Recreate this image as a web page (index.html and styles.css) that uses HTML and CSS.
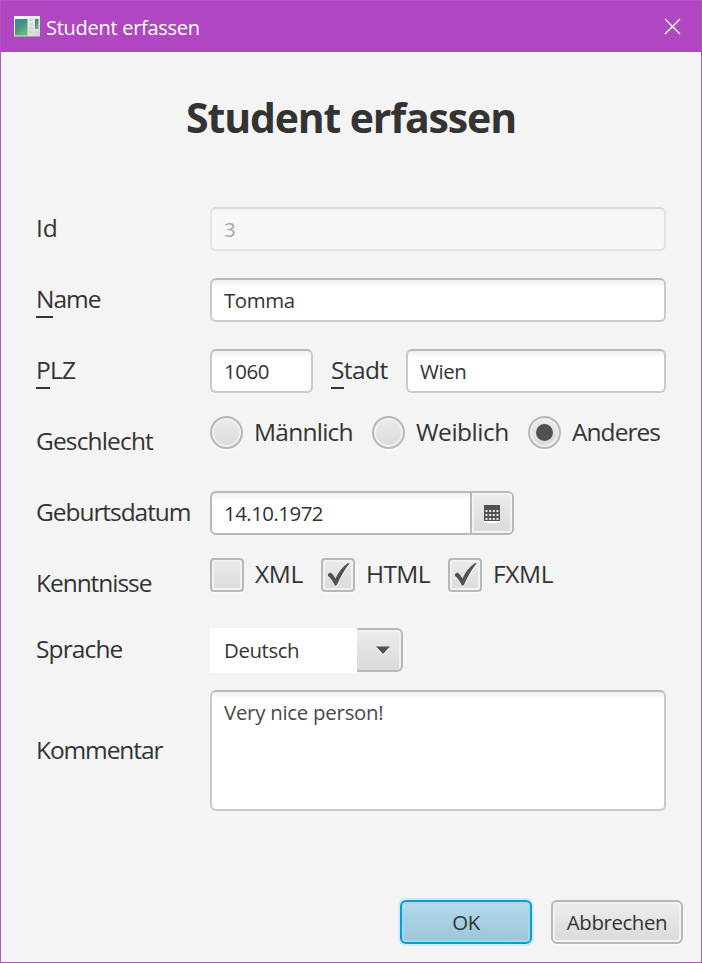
FILE: index.html
```
<!DOCTYPE html>
<html lang="de">
<head>
<meta charset="utf-8">
<title>Student erfassen</title>
<link rel="stylesheet" href="styles.css">
</head>
<body>
<div class="window">
  <header class="titlebar">
    <svg class="app-icon" width="28" height="23" viewBox="0 0 28 23">
      <defs>
        <linearGradient id="pane" x1="0" y1="0" x2="0.6" y2="1"><stop offset="0" stop-color="#4680a8"/><stop offset="0.5" stop-color="#43957f"/><stop offset="1" stop-color="#6cb87c"/></linearGradient>
        <linearGradient id="frame" x1="0" y1="0" x2="1" y2="1"><stop offset="0" stop-color="#fafafa"/><stop offset="1" stop-color="#d5d5d8"/></linearGradient>
      </defs>
      <rect x="0.5" y="0.500" width="27" height="22" fill="#8d5b9c"/>
      <rect x="1" y="1" width="26" height="20.5" fill="url(#frame)"/>
      <rect x="2" y="4" width="12.5" height="16.5" fill="url(#pane)"/>
      <path d="M16 5h4M16 9h4M16 13h4M16 17h4M22 17h4" stroke="#d2d4d6" stroke-width="2"/>
      <rect x="22" y="4" width="3.5" height="10" fill="url(#pane)"/>
    </svg>
    <span class="window-title">Student erfassen</span>
    <svg class="close" width="17" height="17" viewBox="0 0 17 17"><path d="M1 1L16 16M16 1L1 16" stroke="#fff" stroke-width="1.3" fill="none"/></svg>
  </header>
  <main>
    <h1>Student erfassen</h1>
    <form class="form">
      <span class="label id">Id</span>
      <div class="cell"><div class="input disabled grow">3</div></div>

      <span class="label name"><span class="key">N</span>ame</span>
      <div class="cell"><div class="input grow">Tomma</div></div>

      <span class="label plz"><span class="key">P</span>LZ</span>
      <div class="cell">
        <div class="input zip">1060</div>
        <span class="label city-label"><span class="key">S</span>tadt</span>
        <div class="input grow">Wien</div>
      </div>

      <span class="label gender">Geschlecht</span>
      <div class="cell raised">
        <span class="radio"></span><span class="label option male">Männlich</span>
        <span class="radio"></span><span class="label option female">Weiblich</span>
        <span class="radio selected"></span><span class="label option other">Anderes</span>
      </div>

      <span class="label birth">Geburtsdatum</span>
      <div class="cell">
        <div class="datepicker">
          <span class="date">14.10.1972</span>
          <span class="date-button">
            <svg width="16" height="18" viewBox="0 0 16 18"><path d="M0 17h16" stroke="#fff" stroke-width="2"/><path d="M0 0h16v16H0z" fill="#515151"/><path d="M1.5 6h13M1.5 10h13M1.5 14h13" stroke="#eee" stroke-width="2" stroke-dasharray="2 1.65"/></svg>
          </span>
        </div>
      </div>

      <span class="label skills">Kenntnisse</span>
      <div class="cell raised">
        <span class="check"></span><span class="label option xml">XML</span>
        <span class="check"><svg width="24" height="26" viewBox="0 0 24 26"><path d="M2 14.5L5 12Q8 14 9.500 18Q14 8 22.500 2L24 2.500Q16.500 11 11 24.500L9 25Q6 18 2 14.500Z" fill="#fff"/><path d="M2 12L4.500 10.500Q8 13 9.500 16.500Q14 6.500 22 1L23.500 1.500Q16.500 10 11 23L9 24Q6 17 2 14Z" fill="#515151"/></svg></span><span class="label option html">HTML</span>
        <span class="check"><svg width="24" height="26" viewBox="0 0 24 26"><path d="M2 14.5L5 12Q8 14 9.500 18Q14 8 22.500 2L24 2.500Q16.500 11 11 24.500L9 25Q6 18 2 14.500Z" fill="#fff"/><path d="M2 12L4.500 10.500Q8 13 9.500 16.500Q14 6.500 22 1L23.500 1.500Q16.500 10 11 23L9 24Q6 17 2 14Z" fill="#515151"/></svg></span><span class="label option fxml">FXML</span>
      </div>

      <span class="label lang">Sprache</span>
      <div class="cell">
        <div class="combo">
          <span class="combo-value">Deutsch</span>
          <span class="combo-button"><svg width="14" height="10" viewBox="0 0 14 10"><path d="M0 2h14L7 9.500z" fill="#fff"/><path d="M0 0.500h14L7 8z" fill="#515151"/></svg></span>
        </div>
      </div>

      <span class="label comment">Kommentar</span>
      <div class="cell comment-cell"><div class="input area grow">Very nice person!</div></div>
    </form>
    <footer class="actions">
      <button class="button primary" type="button">OK</button>
      <button class="button cancel" type="button">Abbrechen</button>
    </footer>
  </main>
</div>
</body>
</html>
```
FILE: styles.css
```
* { box-sizing: border-box; }
body {
  margin: 0;
  font-family: "Open Sans", "Noto Sans", sans-serif;
  color: #333;
}
.window {
  width: 702px;
  height: 963px;
  display: flex;
  flex-direction: column;
  border: 1px solid #b455c4;
  background: #f4f4f4;
}
.titlebar {
  height: 51px;
  padding: 0 20px 0 12px;
  display: flex;
  align-items: center;
  background: #b146c2;
  color: #fff;
}
.window-title {
  flex: 1;
  margin-left: 5px;
  padding-top: 1px;
  font-size: 20px;
  letter-spacing: -0.28px;
}
main { flex: 1; display: flex; flex-direction: column; }
h1 {
  margin: 0;
  padding-top: 38px;
  height: 141px;
  text-align: center;
  font-size: 41px;
  line-height: 55px;
  letter-spacing: -1.15px;
}
.form {
  margin: 0 36px 0 35px;
  display: grid;
  grid-template-columns: 174px 456px;
  grid-template-rows: repeat(6, 71px) 62px 140px;
  align-items: center;
}
.label {
  font-size: 24.5px;
  line-height: 34px;
  padding-bottom: 2px;
  white-space: nowrap;
}
.id { letter-spacing: 0; }
.name { letter-spacing: -1px; }
.plz { letter-spacing: -0.8px; }
.gender { letter-spacing: -0.85px; }
.birth { letter-spacing: -1.05px; }
.skills { letter-spacing: -1.05px; }
.lang { letter-spacing: -0.87px; }
.comment { letter-spacing: -1.1px; }
.name, .plz, .city-label { padding-bottom: 0; }
.key { display: inline-block; height: 36px; border-bottom: 2px solid #333; vertical-align: top; }
.cell { display: flex; align-items: center; }
.raised { padding-bottom: 18px; }
.grow { flex: 1; }
.input {
  height: 44px;
  padding: 0 12px;
  border: 2px solid #cacaca;
  border-top-color: #b8b8b8;
  border-radius: 6px;
  background: linear-gradient(#f0f0f0, #fff 8px);
  font-size: 20.4px;
  line-height: 40px;
  letter-spacing: -0.4px;
}
.disabled { opacity: 0.4; }
.zip { width: 103px; }
.city-label { width: 57px; margin: 0 18px; letter-spacing: -0.6px; }
.radio {
  width: 33px;
  height: 33px;
  flex: none;
  display: grid;
  place-items: center;
  border: 2px solid #b8b8b8;
  border-radius: 50%;
  background: linear-gradient(#ebebeb, #dadada);
  box-shadow: inset 0 0 0 2px #f0f0f0, 0 2px 1px #fafafa;
}
.selected::after { content: ""; width: 17px; height: 17px; border-radius: 50%; background: #515151; }
.option { margin-left: 11px; }
.male { width: 118px; letter-spacing: -0.75px; }
.female { width: 112px; letter-spacing: -0.5px; }
.other { letter-spacing: -0.95px; }
.datepicker {
  width: 304px;
  height: 44px;
  display: flex;
  overflow: hidden;
  border: 2px solid #b8b8b8;
  border-radius: 6px;
  background: linear-gradient(#f0f0f0, #fff 8px);
}
.date { flex: 1; padding-left: 12px; font-size: 20.4px; line-height: 40px; letter-spacing: -0.5px; }
.date-button {
  width: 42px;
  display: grid;
  place-items: center;
  padding-top: 2px;
  border-left: 2px solid #b8b8b8;
  background: linear-gradient(#ececec, #dadada);
  box-shadow: inset 0 0 0 2px #f2f2f2;
}
.check {
  width: 34px;
  height: 34px;
  flex: none;
  display: grid;
  place-items: center;
  border: 2px solid #b8b8b8;
  border-radius: 4px;
  background: linear-gradient(#ebebeb, #dadada);
  box-shadow: inset 0 0 0 2px #f2f2f2, 0 2px 1px #fafafa;
}
.xml { width: 66px; letter-spacing: -0.3px; }
.html { width: 82px; letter-spacing: -0.6px; }
.fxml { letter-spacing: -0.4px; }
.combo { width: 193px; height: 44px; display: flex; }
.combo-value {
  width: 147px;
  padding-left: 14px;
  background: #fff;
  box-shadow: 0 1px 0 #fcfcfc;
  font-size: 20.4px;
  line-height: 45px;
  letter-spacing: -0.4px;
}
.combo-button {
  flex: 1;
  display: grid;
  place-items: center;
  padding: 2px 0 0 7px;
  border: 2px solid #b8b8b8;
  border-left: 0;
  border-radius: 0 6px 6px 0;
  background: linear-gradient(#ececec, #dadada);
  box-shadow: inset -1px 1px 0 1px #f0f0f0;
}
.comment-cell { padding-bottom: 2px; }
.area { height: 121px; color: #484848; letter-spacing: -0.25px; }
.actions { display: flex; gap: 19px; padding: 79px 0 0 399px; }
.button {
  width: 132px;
  height: 44px;
  padding: 0;
  border: 2px solid #b8b8b8;
  border-radius: 6px;
  background: linear-gradient(#ededed, #dadada);
  box-shadow: inset 0 0 0 2px #f2f2f2, 0 2px 1px #fafafa;
  color: #333;
  font: 20.4px "Open Sans", sans-serif;
  letter-spacing: -0.4px;
}
.primary {
  border-color: #039ed3;
  background: linear-gradient(#b3daec, #9bc5da);
  box-shadow: inset 0 0 0 2px #a8d6ea, 0 0 0 2px #d0ebf3;
}
```
